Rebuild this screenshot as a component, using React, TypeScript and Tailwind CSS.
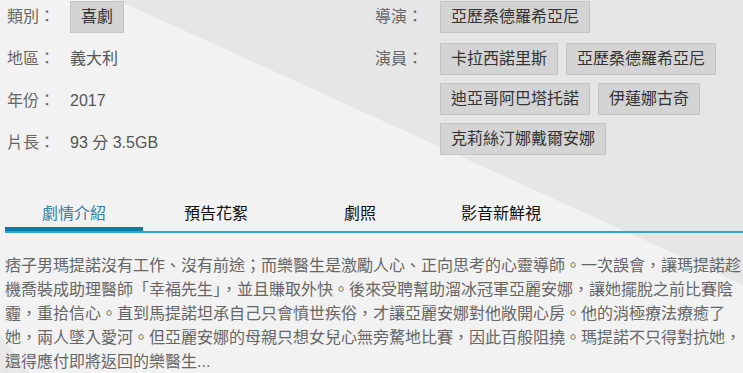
import React from "react";

const font = { fontFamily: '"Liberation Sans", "Noto Sans CJK TC", sans-serif' };

function Tag({ children }: { children: React.ReactNode }) {
  return (
    <div className="h-[32px] px-[10px] flex items-center border border-[#c4c4c4] bg-[#d4d4d4] text-[16px] text-[#333] leading-none whitespace-nowrap">
      {children}
    </div>
  );
}

function Row({ label, lw, children }: { label: string; lw: string; children: React.ReactNode }) {
  return (
    <div className="flex items-start">
      <div className={`${lw} h-[32px] flex items-center text-[16px] text-[#666] whitespace-nowrap`}>{label}</div>
      <div className="flex-1">{children}</div>
    </div>
  );
}

export default function App() {
  const tabs = [
    { t: "劇情介紹", w: "w-[138px]", active: true },
    { t: "預告花絮", w: "w-[146px]" },
    { t: "劇照", w: "w-[142px]" },
    { t: "影音新鮮視", w: "w-[140px]" },
  ];
  return (
    <div className="relative w-[743px] h-[373px] overflow-hidden bg-[#f2f2f2]" style={font}>
      <div className="absolute inset-0 bg-[#e6e6e6] [clip-path:polygon(117px_0,743px_0,743px_285px)]" />
      <div className="absolute inset-0 bg-[#e8e8e8] [clip-path:polygon(0_335px,30px_373px,0_373px)]" />
      <div className="relative">
        <div className="flex pt-px">
          <div className="w-[375px] pl-[7px] flex flex-col gap-[10px]">
            <Row lw="w-[63px]" label="類別："><div className="flex"><Tag>喜劇</Tag></div></Row>
            <Row lw="w-[63px]" label="地區："><div className="h-[32px] flex items-center text-[16px] text-[#555]">義大利</div></Row>
            <Row lw="w-[63px]" label="年份："><div className="h-[32px] flex items-center text-[16px] text-[#555]">2017</div></Row>
            <Row lw="w-[63px]" label="片長："><div className="h-[32px] flex items-center text-[16px] text-[#555]">93 分 3.5GB</div></Row>
          </div>
          <div className="flex-1 flex flex-col gap-[10px]">
            <Row lw="w-[65px]" label="導演："><div className="flex"><Tag>亞歷桑德羅希亞尼</Tag></div></Row>
            <Row lw="w-[65px]" label="演員：">
              <div className="flex flex-wrap gap-[8px] w-[290px]">
                <Tag>卡拉西諾里斯</Tag>
                <Tag>亞歷桑德羅希亞尼</Tag>
                <Tag>迪亞哥阿巴塔托諾</Tag>
                <Tag>伊蓮娜古奇</Tag>
                <Tag>克莉絲汀娜戴爾安娜</Tag>
              </div>
            </Row>
          </div>
        </div>
        <div className="ml-[5px] mt-[41px] border-b-2 border-[#2ea4d4] flex">
          {tabs.map((tab) => (
            <div
              key={tab.t}
              className={`${tab.w} h-[31px] flex justify-center items-start text-[16px] leading-[20px] pt-[4px] ${
                tab.active ? "text-[#3a7fa6] border-b-4 border-[#0a7aa6]" : "text-[#111]"
              }`}
            >
              {tab.t}
            </div>
          ))}
        </div>
        <p className="ml-[5px] mt-[21px] text-[16px] leading-[24px] text-[#666] whitespace-nowrap">
          痞子男瑪提諾沒有工作、沒有前途；而樂醫生是激勵人心、正向思考的心靈導師。一次誤會，讓瑪提諾趁
          <br />
          機喬裝成助理醫師「幸福先生」，並且賺取外快。後來受聘幫助溜冰冠軍亞麗安娜，讓她擺脫之前比賽陰
          <br />
          霾，重拾信心。直到馬提諾坦承自己只會憤世疾俗，才讓亞麗安娜對他敞開心房。他的消極療法療癒了
          <br />
          她，兩人墜入愛河。但亞麗安娜的母親只想女兒心無旁騖地比賽，因此百般阻撓。瑪提諾不只得對抗她，
          <br />
          還得應付即將返回的樂醫生...
        </p>
      </div>
    </div>
  );
}
